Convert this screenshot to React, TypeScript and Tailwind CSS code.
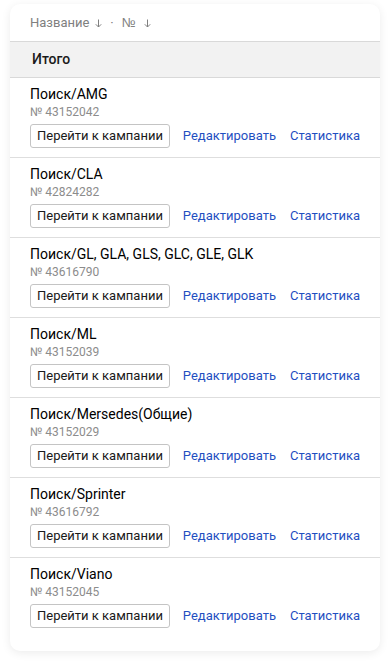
const campaigns = [
  { name: 'Поиск/AMG', id: '43152042' },
  { name: 'Поиск/CLA', id: '42824282' },
  { name: 'Поиск/GL, GLA, GLS, GLC, GLE, GLK', id: '43616790' },
  { name: 'Поиск/ML', id: '43152039' },
  { name: 'Поиск/Mersedes(Общие)', id: '43152029' },
  { name: 'Поиск/Sprinter', id: '43616792' },
  { name: 'Поиск/Viano', id: '43152045' },
];

const SortArrow = () => (
  <svg width="7" height="9" viewBox="0 0 7 9" className="mt-[2px]" fill="none" stroke="#808080" strokeWidth="1">
    <path d="M3.5 0.5V8M0.8 5.3L3.5 8L6.2 5.3" />
  </svg>
);

const App = () => {
  return (
    <div className="min-h-screen bg-white px-[10px] pt-[4px] font-['Roboto','Liberation_Sans',sans-serif]">
      <div className="rounded-[10px] bg-white shadow-[0_2px_10px_rgba(0,0,0,0.08)] pb-[14px]">
        {/* Sort header */}
        <div className="flex h-[37px] items-center px-5 text-[13px] text-[#808080]">
          <span>Название</span>
          <span className="ml-[6px] flex"><SortArrow /></span>
          <span className="mx-[8px]">·</span>
          <span className="font-['Liberation_Sans',sans-serif]">№</span>
          <span className="ml-[8px] flex"><SortArrow /></span>
        </div>

        {/* Total row */}
        <div className="flex h-[37px] items-center border-y border-[#d9d9d9] bg-[#f2f2f2] px-[22px] text-[14px] font-medium text-[#1a1a1a]">
          Итого
        </div>

        {campaigns.map((c, i) => (
          <div
            key={c.id}
            className={`px-5 pt-[7px] pb-[9px] ${i < campaigns.length - 1 ? 'border-b border-[#dedede]' : ''}`}
          >
            <div className="text-[14px] leading-[18px] text-black">{c.name}</div>
            <div className="mt-[1px] text-[12px] leading-[16px] text-[#8c8c8c]">№ {c.id}</div>
            <div className="mt-[4px] flex items-center">
              <button className="h-[24px] w-[145px] rounded-[3px] border border-[#c4c4c4] bg-white text-[13px] text-[#1a1a1a]">
                Перейти к кампании
              </button>
              <a className="ml-[13px] text-[13px] text-[#1f4fc1]">Редактировать</a>
              <a className="ml-[14px] text-[13px] text-[#1f4fc1]">Статистика</a>
            </div>
          </div>
        ))}
      </div>
    </div>
  );
};

export default App;
